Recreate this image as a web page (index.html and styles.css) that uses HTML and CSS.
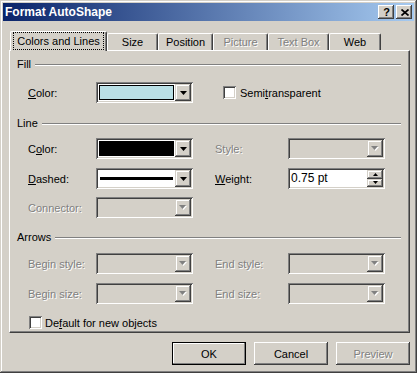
FILE: index.html
```html
<!DOCTYPE html>
<html lang="en">
<head>
    <meta charset="UTF-8">
    <title>Format AutoShape</title>
    <link rel="stylesheet" href="styles.css">
</head>
<body>
    <div class="window">
        <div class="titlebar">
            <span class="title">Format AutoShape</span>
            <div class="cap-btns">
                <span class="cap-btn help">?</span>
                <span class="cap-btn close">
                    <svg width="8" height="7" viewBox="0 0 8 7"><path d="M0.5 0.5L7.5 6.5M7.5 0.5L0.5 6.5" stroke="#000" stroke-width="1.7"/></svg>
                </span>
            </div>
        </div>

        <div class="content">
            <div class="tabs">
                <div class="tab active t-colors"><span class="focus">Colors and Lines</span></div>
                <div class="tab t-size">Size</div>
                <div class="tab t-position">Position</div>
                <div class="tab t-picture disabled">Picture</div>
                <div class="tab t-textbox disabled">Text Box</div>
                <div class="tab t-web">Web</div>
            </div>

            <div class="panel">
                <!-- Fill -->
                <div class="group-head head-fill"><span>Fill</span><i class="rule"></i></div>
                <div class="row row-fill">
                    <span class="lbl"><u>C</u>olor:</span>
                    <div class="combo">
                        <span class="field"><span class="swatch"></span></span>
                        <span class="drop"><svg width="7" height="4"><polygon points="0,0 7,0 3.5,4" fill="#000"/></svg></span>
                    </div>
                    <span class="check check-semi"><span class="box"></span>Semi<u>t</u>ransparent</span>
                </div>

                <!-- Line -->
                <div class="group-head head-line"><span>Line</span><i class="rule"></i></div>
                <div class="row row-color">
                    <span class="lbl">C<u>o</u>lor:</span>
                    <div class="combo">
                        <span class="field"><span class="swatch black"></span></span>
                        <span class="drop"><svg width="7" height="4"><polygon points="0,0 7,0 3.5,4" fill="#000"/></svg></span>
                    </div>
                    <span class="rlbl disabled">Style:</span>
                    <div class="combo off">
                        <span class="field"></span>
                        <span class="drop"><svg width="8" height="5"><polygon points="1,1 8,1 4.5,5" fill="#fff"/><polygon points="0,0 7,0 3.5,4" fill="#808080"/></svg></span>
                    </div>
                </div>
                <div class="row row-dashed">
                    <span class="lbl"><u>D</u>ashed:</span>
                    <div class="combo">
                        <span class="field"><span class="dash"></span></span>
                        <span class="drop"><svg width="7" height="4"><polygon points="0,0 7,0 3.5,4" fill="#000"/></svg></span>
                    </div>
                    <span class="rlbl"><u>W</u>eight:</span>
                    <div class="spin">
                        <span class="val">0.75 pt</span>
                        <span class="arrows">
                            <span class="sbtn"><svg width="5" height="3"><polygon points="2.5,0 5,3 0,3" fill="#000"/></svg></span>
                            <span class="sbtn"><svg width="5" height="3"><polygon points="0,0 5,0 2.5,3" fill="#000"/></svg></span>
                        </span>
                    </div>
                </div>
                <div class="row row-connector">
                    <span class="lbl disabled">Connector:</span>
                    <div class="combo off">
                        <span class="field"></span>
                        <span class="drop"><svg width="8" height="5"><polygon points="1,1 8,1 4.5,5" fill="#fff"/><polygon points="0,0 7,0 3.5,4" fill="#808080"/></svg></span>
                    </div>
                </div>

                <!-- Arrows -->
                <div class="group-head head-arrows"><span>Arrows</span><i class="rule"></i></div>
                <div class="row row-bstyle">
                    <span class="lbl disabled">Begin style:</span>
                    <div class="combo off">
                        <span class="field"></span>
                        <span class="drop"><svg width="8" height="5"><polygon points="1,1 8,1 4.5,5" fill="#fff"/><polygon points="0,0 7,0 3.5,4" fill="#808080"/></svg></span>
                    </div>
                    <span class="rlbl disabled">End style:</span>
                    <div class="combo off">
                        <span class="field"></span>
                        <span class="drop"><svg width="8" height="5"><polygon points="1,1 8,1 4.5,5" fill="#fff"/><polygon points="0,0 7,0 3.5,4" fill="#808080"/></svg></span>
                    </div>
                </div>
                <div class="row row-bsize">
                    <span class="lbl disabled">Begin size:</span>
                    <div class="combo off">
                        <span class="field"></span>
                        <span class="drop"><svg width="8" height="5"><polygon points="1,1 8,1 4.5,5" fill="#fff"/><polygon points="0,0 7,0 3.5,4" fill="#808080"/></svg></span>
                    </div>
                    <span class="rlbl disabled">End size:</span>
                    <div class="combo off">
                        <span class="field"></span>
                        <span class="drop"><svg width="8" height="5"><polygon points="1,1 8,1 4.5,5" fill="#fff"/><polygon points="0,0 7,0 3.5,4" fill="#808080"/></svg></span>
                    </div>
                </div>
                <div class="row row-default">
                    <span class="check check-default"><span class="box"></span>De<u>f</u>ault for new objects</span>
                </div>
            </div>

            <div class="buttons">
                <span class="btn default">OK</span>
                <span class="btn">Cancel</span>
                <span class="btn disabled">Preview</span>
            </div>
        </div>
    </div>
</body>
</html>
```

FILE: styles.css
```css
body {
    margin: 0;
    background: #d4d0c8;
    font-family: "Liberation Sans", Arial, sans-serif;
    font-size: 11px;
    color: #000;
}
u {
    text-decoration: underline;
    text-underline-offset: 1px;
}
.window {
    width: 417px;
    height: 373px;
    box-sizing: border-box;
    padding: 3px;
    background: #d4d0c8;
    box-shadow: inset -1px -1px #404040, inset 1px 1px #d4d0c8, inset -2px -2px #808080, inset 2px 2px #fff;
}

/* title bar */
.titlebar {
    height: 18px;
    display: flex;
    align-items: center;
    padding: 0 2px;
    background: linear-gradient(to right, #0a246a, #a6caf0);
}
.title {
    flex: 1;
    color: #fff;
    font-weight: bold;
    font-size: 12px;
}
.cap-btns {
    display: flex;
    gap: 2px;
}
.cap-btn {
    width: 16px;
    height: 14px;
    box-sizing: border-box;
    display: flex;
    align-items: center;
    justify-content: center;
    background: #d4d0c8;
    box-shadow: inset -1px -1px #404040, inset 1px 1px #fff, inset -2px -2px #808080, inset 2px 2px #d4d0c8;
}
.cap-btn.help {
    font-weight: bold;
    font-size: 11px;
    line-height: 14px;
    padding-left: 1px;
}
.cap-btn.close svg {
    margin-left: 1px;
}

/* tabs */
.content {
    padding: 10px 4px 0 6px;
}
.tabs {
    display: flex;
    align-items: flex-end;
    height: 19px;
    padding-left: 1px;
    position: relative;
    z-index: 1;
}
.tab {
    height: 17px;
    box-sizing: border-box;
    border: 1px solid;
    border-color: #fff #404040 transparent #fff;
    border-bottom: 0;
    border-radius: 2px 2px 0 0;
    box-shadow: inset -1px 0 #808080;
    display: flex;
    align-items: center;
    justify-content: center;
    background: #d4d0c8;
}
.tab.active {
    height: 20px;
    margin-bottom: -1px;
    padding-bottom: 2px;
}
.tab.disabled {
    color: #808080;
    text-shadow: 1px 1px #fff;
}
.focus {
    outline: 1px dotted #000;
    outline-offset: 1px;
    padding: 1px 2px;
}
.t-colors { width: 97px; }
.t-size { width: 51px; }
.t-position { width: 55px; }
.t-picture { width: 55px; }
.t-textbox { width: 61px; }
.t-web { width: 52px; }

/* panel */
.panel {
    height: 283px;
    box-sizing: border-box;
    border: 1px solid;
    border-color: #fff #404040 #404040 #fff;
    box-shadow: inset -1px -1px #808080;
    padding-left: 7px;
}
.group-head {
    display: flex;
    align-items: center;
    height: 13px;
    margin-right: 8px;
}
.group-head .rule {
    flex: 1;
    height: 0;
    border-top: 1px solid #808080;
    border-bottom: 1px solid #fff;
    margin-left: 4px;
    margin-top: 3px;
}
.head-fill { margin-top: 6px; }
.row-fill { margin-top: 12px; }
.head-line { margin-top: 13px; }
.row-color { margin-top: 9px; }
.row-dashed { margin-top: 9px; }
.row-connector { margin-top: 8px; }
.head-arrows { margin-top: 12px; }
.row-bstyle { margin-top: 10px; }
.row-bsize { margin-top: 9px; }
.row-default { margin-top: 8px; height: 13px; }

.row {
    display: flex;
    align-items: center;
    height: 21px;
    margin-left: 11px;
}
.lbl {
    width: 68px;
}
.rlbl {
    width: 73px;
    margin-left: 22px;
}
.disabled {
    color: #808080;
    text-shadow: 1px 1px #fff;
}

/* combo boxes */
.combo,
.spin {
    width: 97px;
    height: 21px;
    box-sizing: border-box;
    padding: 2px;
    display: flex;
    background: #fff;
    box-shadow: inset 1px 1px #808080, inset -1px -1px #fff, inset 2px 2px #404040, inset -2px -2px #d4d0c8;
}
.combo.off {
    background: #d4d0c8;
}
.field {
    flex: 1;
    display: flex;
    align-items: center;
    padding: 1px;
}
.swatch {
    flex: 1;
    align-self: stretch;
    border: 1px solid #000;
    background: #b9dfe5;
}
.swatch.black {
    background: #000;
}
.dash {
    flex: 1;
    height: 3px;
    background: #000;
    margin: 0 1px;
}
.drop,
.sbtn {
    width: 16px;
    box-sizing: border-box;
    display: flex;
    align-items: center;
    justify-content: center;
    background: #d4d0c8;
    box-shadow: inset -1px -1px #404040, inset 1px 1px #d4d0c8, inset -2px -2px #808080, inset 2px 2px #fff;
}
.drop svg {
    display: block;
}
.spin .val {
    flex: 1;
    line-height: 17px;
    padding-left: 1px;
    font-size: 12px;
}
.spin .arrows {
    width: 16px;
    display: flex;
    flex-direction: column;
}
.sbtn {
    flex: 1;
}
.sbtn svg {
    display: block;
}

/* checkboxes */
.check {
    display: flex;
    align-items: center;
}
.box {
    width: 13px;
    height: 13px;
    box-sizing: border-box;
    background: #fff;
    margin-right: 4px;
    box-shadow: inset 1px 1px #808080, inset -1px -1px #fff, inset 2px 2px #404040, inset -2px -2px #d4d0c8;
}
.check-semi {
    margin-left: 30px;
}
.check-default {
    margin-left: 1px;
}
.check-default .box {
    margin-right: 3px;
}

/* dialog buttons */
.buttons {
    display: flex;
    justify-content: flex-end;
    gap: 8px;
    margin-top: 9px;
}
.btn {
    width: 74px;
    height: 23px;
    box-sizing: border-box;
    display: flex;
    align-items: center;
    justify-content: center;
    box-shadow: inset -1px -1px #404040, inset 1px 1px #fff, inset -2px -2px #808080, inset 2px 2px #d4d0c8;
}
.btn.default {
    box-shadow: inset 0 0 0 1px #000, inset -2px -2px #808080, inset 2px 2px #fff;
}
```
